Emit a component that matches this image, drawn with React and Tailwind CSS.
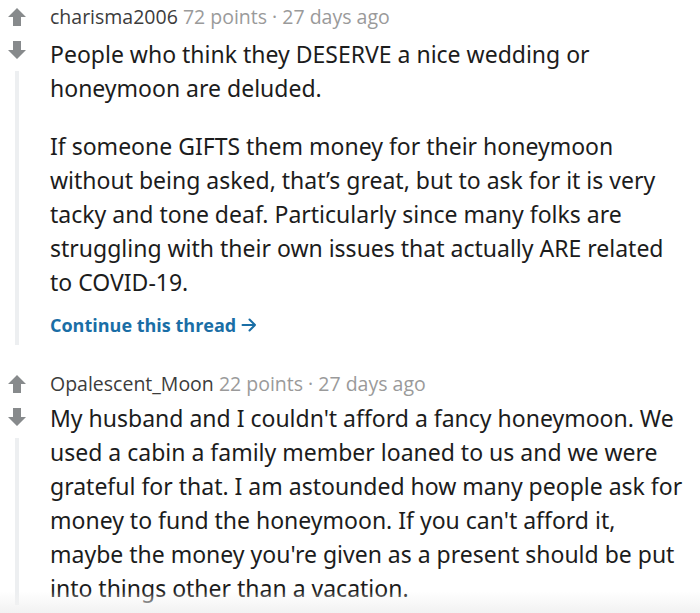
import React from "react";

function Arrow({ down }) {
  return (
    <svg width="20" height="20" viewBox="0 0 20 20" className={down ? "rotate-180" : ""}>
      <path d="M10 1 L19 10 H14 V19 H6 V10 H1 Z" fill="#878a8c" />
    </svg>
  );
}

function Comment({ user, points, time, paragraphs, cont, top, bodyGap }) {
  return (
    <div className={`flex ${top}`}>
      <div className="w-[34px] flex flex-col items-center pt-[7px] shrink-0">
        <Arrow />
        <div className="mt-[13px]">
          <Arrow down />
        </div>
        <div className="mt-[11px] w-[4px] flex-1 bg-[#edeff1]" />
      </div>
      <div className="flex-1 pl-[16px] pt-[4px]">
        <div className="text-[19.5px] leading-[26px] font-['Open_Sans','Noto_Sans',sans-serif]">
          <span className="text-[#3c3c3c]">{user}</span>
          <span className="text-[#9a9a9a]"> {points} · {time}</span>
        </div>
        <div className={`${bodyGap} text-[23px] leading-[34px] text-[#1c1c1c] font-['Noto_Sans',sans-serif] pr-[10px]`}>
          {paragraphs.map((p, i) => (
            <p key={i} className={i > 0 ? "mt-[24px]" : ""}>{p}</p>
          ))}
        </div>
        {cont && (
          <div className="mt-[13px] pb-[7px] flex items-center gap-[5px] text-[18px] leading-[26px] font-bold text-[#1a6ea6] font-['Open_Sans','Noto_Sans',sans-serif]">
            <span>Continue this thread</span>
            <svg width="16" height="16" viewBox="0 0 16 16" fill="none" stroke="#1a6ea6" strokeWidth="2" strokeLinecap="round" strokeLinejoin="round">
              <path d="M1.5 8 H14 M8.5 2.5 L14 8 L8.5 13.5" />
            </svg>
          </div>
        )}
      </div>
    </div>
  );
}

export default function App() {
  return (
    <div className="relative w-[700px] h-[613px] bg-white overflow-hidden">
      <Comment
        top=""
        bodyGap="mt-[7px]"
        user="charisma2006"
        points="72 points"
        time="27 days ago"
        paragraphs={[
          "People who think they DESERVE a nice wedding or honeymoon are deluded.",
          "If someone GIFTS them money for their honeymoon without being asked, that’s great, but to ask for it is very tacky and tone deaf. Particularly since many folks are struggling with their own issues that actually ARE related to COVID-19.",
        ]}
        cont
      />
      <Comment
        top="mt-[22px]"
        bodyGap="mt-[4px]"
        user="Opalescent_Moon"
        points="22 points"
        time="27 days ago"
        paragraphs={[
          "My husband and I couldn't afford a fancy honeymoon. We used a cabin a family member loaned to us and we were grateful for that. I am astounded how many people ask for money to fund the honeymoon. If you can't afford it, maybe the money you're given as a present should be put into things other than a vacation.",
        ]}
      />
      <div className="absolute left-0 right-0 bottom-0 h-[22px] bg-gradient-to-b from-transparent to-[#f2f2f2]" />
    </div>
  );
}
